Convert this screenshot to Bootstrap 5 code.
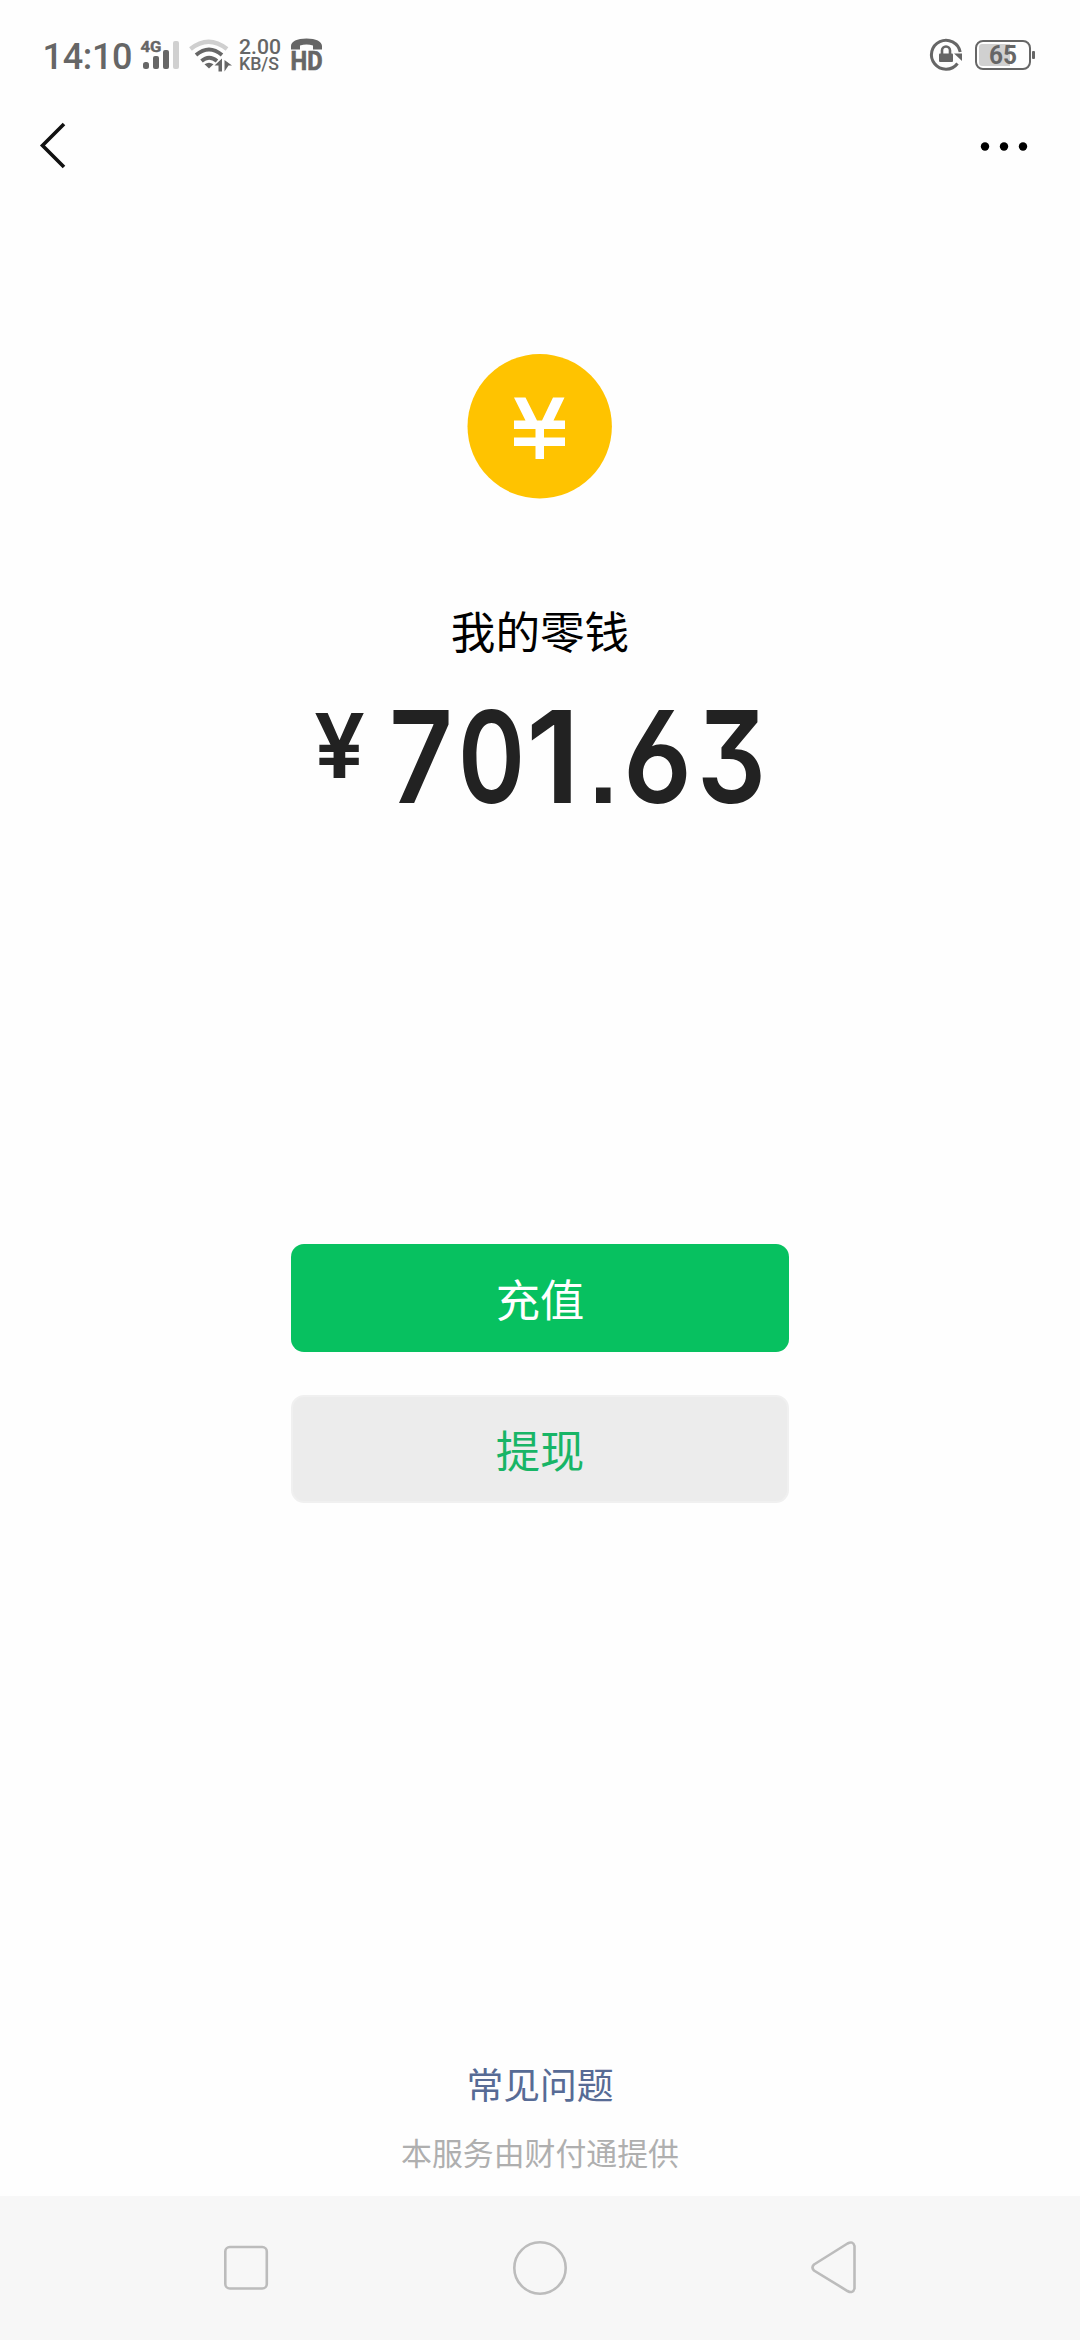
<!DOCTYPE html>
<html lang="zh-CN">
<head>
<meta charset="utf-8">
<meta name="viewport" content="width=device-width, initial-scale=1">
<title>我的零钱</title>
<link href="https://cdn.jsdelivr.net/npm/bootstrap@5.3.0/dist/css/bootstrap.min.css" rel="stylesheet">
<style>
body{background:#fefefe;color:#000;font-family:Roboto,"Noto Sans CJK SC",sans-serif;overflow:hidden}
svg{display:block;flex:none}
svg text{font-family:Roboto,sans-serif}
.screen{height:2340px}
.statusbar{height:112px;padding:0 40px 0 40px}
.topbar{height:68px;padding:0 46px 0 36px}
.coin{margin-top:174px}
.wallet-name{margin-top:101px;height:68px;line-height:68px;font-size:44.6px}
.amount{margin-top:41px;height:98px;color:#222;font-family:Inter,sans-serif;font-weight:600;line-height:98px;font-feature-settings:"cv09","ss01","cv03","cv04"}
.amount-text{font-size:128px;fill:#222}
.amount text{font-family:Inter,sans-serif;font-weight:600}
.amount .decimal-point{font-family:"Liberation Sans",sans-serif;font-weight:700;font-size:103px}
.actions{width:498px;margin-top:437px;gap:43px}
.btn-wallet{height:108px;border-radius:13px;font-size:44.3px;line-height:108px;padding:4px 0 0;border:0;color:#fff;background:#07c160}
.btn-wallet-grey{color:#18b566;background:#ececec;border:2px solid #f0f0f0;line-height:104px}
.faq{font-size:36.8px;line-height:56px;color:#576b95}
.provider{font-size:30.9px;line-height:48px;color:#afafaf;margin-top:16px;margin-bottom:17px}
.softkeys{height:144px;background:#f7f7f7;padding:0 223px}
</style>
</head>
<body>
<div class="screen d-flex flex-column align-items-center">
  <header class="statusbar w-100 d-flex align-items-center justify-content-between">
    <svg width="300" height="112" viewBox="40 0 300 112" fill="#666">
      <text x="42.5" y="69" font-size="36" font-weight="500" textLength="90">14:10</text>
      <text x="140.500" y="52" font-size="15.500" font-weight="700" textLength="21" lengthAdjust="spacingAndGlyphs" stroke="#666" stroke-width=".4">4G</text>
      <rect x="143" y="62" width="6" height="7" rx="2.5"/>
      <rect x="153" y="56" width="6" height="13" rx="2"/>
      <rect x="163" y="50" width="6" height="19" rx="2"/>
      <rect x="173" y="41" width="6" height="28" rx="2" fill="#d0d0d0"/>
      <g fill="none" stroke="#666" stroke-width="3.8">
        <path d="M190.500 49Q208.500 34.500 227 49" stroke="#cfcfcf" stroke-width="4.4"/>
        <path d="M196 55Q209 44 222 55"/>
        <path d="M201.500 61Q209 54.500 217 61"/>
      </g>
      <path d="M204.500 64.300Q209 61 213.500 64.300L209 68.500Z"/>
      <path d="M214.500 65.500 222 58.500V71.500H218.500V65.500Z"/>
      <path d="M224.500 60 232 65.500H228.500L224.500 71.500Z"/>
      <text x="239" y="54" font-size="21" font-weight="500" textLength="42" lengthAdjust="spacingAndGlyphs">2.00</text>
      <text x="239" y="69.500" font-size="18.500" font-weight="500" textLength="40" lengthAdjust="spacingAndGlyphs">KB/S</text>
      <path d="M291 49.500V46C291 41.500 297 38.500 306.500 38.500S322 41.500 322 46V49.500H313V45.500Q306.500 43.500 300 45.500V49.500Z"/>
      <text x="290.500" y="70" font-size="26" font-weight="700" textLength="32" lengthAdjust="spacingAndGlyphs" stroke="#666" stroke-width=".7">HD</text>
    </svg>
    <svg width="120" height="112" viewBox="920 0 120 112" fill="#666">
      <path d="M957.500 63.500A14.500 14.500 0 1 1 960.200 52" fill="none" stroke="#666" stroke-width="3"/>
      <path d="M954 53.500H962V61Z"/>
      <rect x="939" y="53.500" width="14" height="8.500" rx="1"/>
      <path d="M942 54V50.500a4 4 0 0 1 8 0V54" fill="none" stroke="#666" stroke-width="2.600"/>
      <rect x="976" y="41" width="54" height="28" rx="7" fill="none" stroke="#666" stroke-width="2"/>
      <path d="M982 44H1010V66H982Q979 66 979 63V47Q979 44 982 44Z" fill="#d0d0d0"/>
      <rect x="1032" y="51" width="3" height="8" rx="1"/>
      <text x="989" y="64" font-size="25" font-weight="700" textLength="28" lengthAdjust="spacingAndGlyphs">65</text>
    </svg>
  </header>
  <nav class="topbar w-100 d-flex align-items-center justify-content-between">
    <svg width="34" height="68" viewBox="36 112 34 68" fill="none" stroke="#111" stroke-width="3.600"><path d="M64 124 42.500 145.500 64 167"/></svg>
    <svg width="60" height="68" viewBox="974 112 60 68"><circle cx="985" cy="146.500" r="4.200"/><circle cx="1004" cy="146.500" r="4.200"/><circle cx="1023" cy="146.500" r="4.200"/></svg>
  </nav>
  <svg class="coin" width="146" height="145" viewBox="467 354 146 145">
    <circle cx="539.700" cy="426.300" r="72.200" fill="#ffc300"/>
    <path d="M514 397.500H525.500L537 420.500H542L553 397.500H564.500L553.500 420.500H565V429H544V437.500H565V446H544V459H535.500V446H514V437.500H535.500V429H514V420.500H525.500Z" fill="#fff"/>
  </svg>
  <div class="wallet-name">我的零钱</div>
  <div class="amount">
    <svg width="460" height="98" viewBox="310 709 460 98" overflow="visible" fill="#222">
      <text x="314" y="778" font-size="90" font-weight="700" textLength="51" lengthAdjust="spacingAndGlyphs">¥</text>
      <g class="amount-text">
        <text x="389" y="803" textLength="64" lengthAdjust="spacingAndGlyphs">7</text>
        <text x="458" y="803" textLength="67" lengthAdjust="spacingAndGlyphs">0</text>
        <text x="526" y="803" textLength="54" lengthAdjust="spacingAndGlyphs">1</text>
        <text x="589" y="803" class="decimal-point">.</text>
        <text x="623" y="803" textLength="69" lengthAdjust="spacingAndGlyphs">6</text>
        <text x="697" y="803" textLength="69" lengthAdjust="spacingAndGlyphs">3</text>
      </g>
    </svg>
  </div>
  <div class="actions d-flex flex-column">
    <button class="btn btn-wallet w-100" type="button">充值</button>
    <button class="btn btn-wallet btn-wallet-grey w-100" type="button">提现</button>
  </div>
  <a class="faq text-decoration-none mt-auto" href="#">常见问题</a>
  <div class="provider">本服务由财付通提供</div>
  <footer class="softkeys w-100 d-flex align-items-center justify-content-between flex-shrink-0">
    <svg width="46" height="60" viewBox="223 2238 46 60" fill="none" stroke="#bcbcbc" stroke-width="2.600"><rect x="225.300" y="2247" width="41.500" height="41.500" rx="4.500"/></svg>
    <svg width="58" height="60" viewBox="511 2238 58 60" fill="none" stroke="#bcbcbc" stroke-width="2.600"><circle cx="540" cy="2268" r="25.700"/></svg>
    <svg width="46" height="60" viewBox="811 2238 46 60" fill="none" stroke="#bcbcbc" stroke-width="2.600"><path d="M814 2264.500 847.500 2243.500Q853 2240.500 854.500 2246V2288.500Q853 2294 847.500 2291L814 2270.500Q811 2267.500 814 2264.500Z"/></svg>
  </footer>
</div>
<script src="https://cdn.jsdelivr.net/npm/bootstrap@5.3.0/dist/js/bootstrap.bundle.min.js"></script>
</body>
</html>
